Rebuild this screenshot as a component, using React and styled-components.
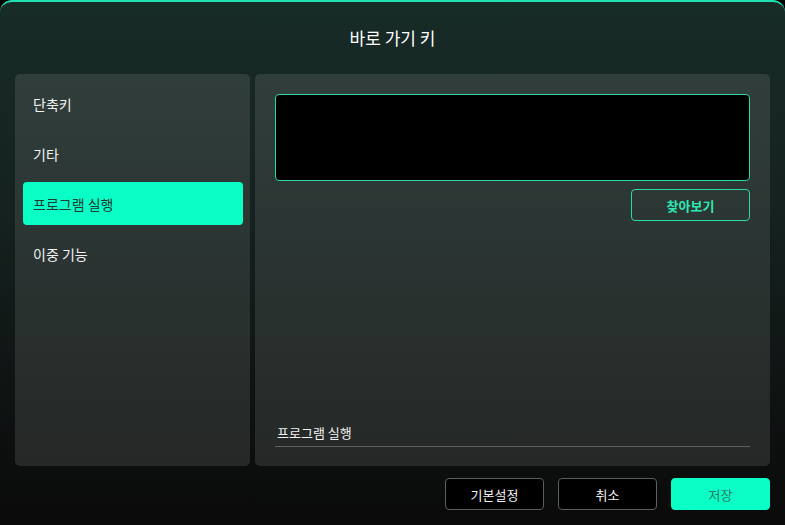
import React from "react";
import styled, { createGlobalStyle } from "styled-components";

const Global = createGlobalStyle`
  html, body { margin: 0; padding: 0; background: #000; }
  body { font-family: "Noto Sans CJK KR", "Noto Sans", sans-serif; }
  * { box-sizing: border-box; }
`;

const Window = styled.div`
  width: 785px;
  height: 525px;
  border-top: 2px solid #1fe0b0;
  border-radius: 12px 12px 0 0;
  background: linear-gradient(180deg, #172b27 0%, #15221f 40%, #0d0f0f 85%, #0a0a0a 100%);
  display: flex;
  flex-direction: column;
  padding: 0 15px;
`;

const Title = styled.h1`
  margin: 0;
  height: 72px;
  display: flex;
  align-items: center;
  justify-content: center;
  font-size: 17px;
  font-weight: 400;
  color: #fff;
  padding-bottom: 2px;
`;

const Body = styled.div`
  display: grid;
  grid-template-columns: 235px 515px;
  gap: 5px;
  height: 392px;
`;

const Panel = styled.div`
  border-radius: 5px;
  background: linear-gradient(180deg, #303e3b 0%, #2a3331 50%, #252827 100%);
`;

const Side = styled(Panel)`
  display: flex;
  flex-direction: column;
  padding: 8px 7px 8px 8px;
  gap: 7px;
`;

const Item = styled.div`
  height: 43px;
  display: flex;
  align-items: center;
  padding-left: 10px;
  font-size: 14px;
  border-radius: 4px;
  color: ${(p) => (p.$active ? "#1d3a33" : "#f2f2f2")};
  background: ${(p) => (p.$active ? "#0affc6" : "transparent")};
`;

const Main = styled(Panel)`
  display: flex;
  flex-direction: column;
  padding: 20px 20px 19px 20px;
`;

const PathBox = styled.div`
  height: 87px;
  background: #000;
  border: 1px solid #2fd6a6;
  border-radius: 4px;
`;

const BrowseRow = styled.div`
  display: flex;
  justify-content: flex-end;
  margin-top: 8px;
`;

const BrowseButton = styled.button`
  width: 119px;
  height: 32px;
  border: 1px solid #2fd6a6;
  border-radius: 4px;
  background: transparent;
  color: #2ee8b2;
  font-family: inherit;
  font-size: 13px;
  font-weight: 700;
`;

const Spacer = styled.div`
  flex: 1;
`;

const Label = styled.div`
  font-size: 13px;
  color: #f2f2f2;
  padding: 0 0 4px 2px;
  border-bottom: 1px solid #5c6160;
`;

const Footer = styled.div`
  display: flex;
  justify-content: flex-end;
  gap: 14px;
  padding-top: 12px;
`;

const FootButton = styled.button`
  width: 99px;
  height: 32px;
  border-radius: 4px;
  font-family: inherit;
  font-size: 13px;
  border: 1px solid ${(p) => (p.$primary ? "#0affc6" : "#5a5e5d")};
  background: ${(p) => (p.$primary ? "#0affc6" : "#000")};
  color: ${(p) => (p.$primary ? "#2a7a64" : "#f2f2f2")};
`;

export default function App() {
  const items = ["단축키", "기타", "프로그램 실행", "이중 기능"];
  return (
    <>
      <Global />
      <Window>
        <Title>바로 가기 키</Title>
        <Body>
          <Side>
            {items.map((t) => (
              <Item key={t} $active={t === "프로그램 실행"}>
                {t}
              </Item>
            ))}
          </Side>
          <Main>
            <PathBox />
            <BrowseRow>
              <BrowseButton>찾아보기</BrowseButton>
            </BrowseRow>
            <Spacer />
            <Label>프로그램 실행</Label>
          </Main>
        </Body>
        <Footer>
          <FootButton>기본설정</FootButton>
          <FootButton>취소</FootButton>
          <FootButton $primary>저장</FootButton>
        </Footer>
      </Window>
    </>
  );
}
